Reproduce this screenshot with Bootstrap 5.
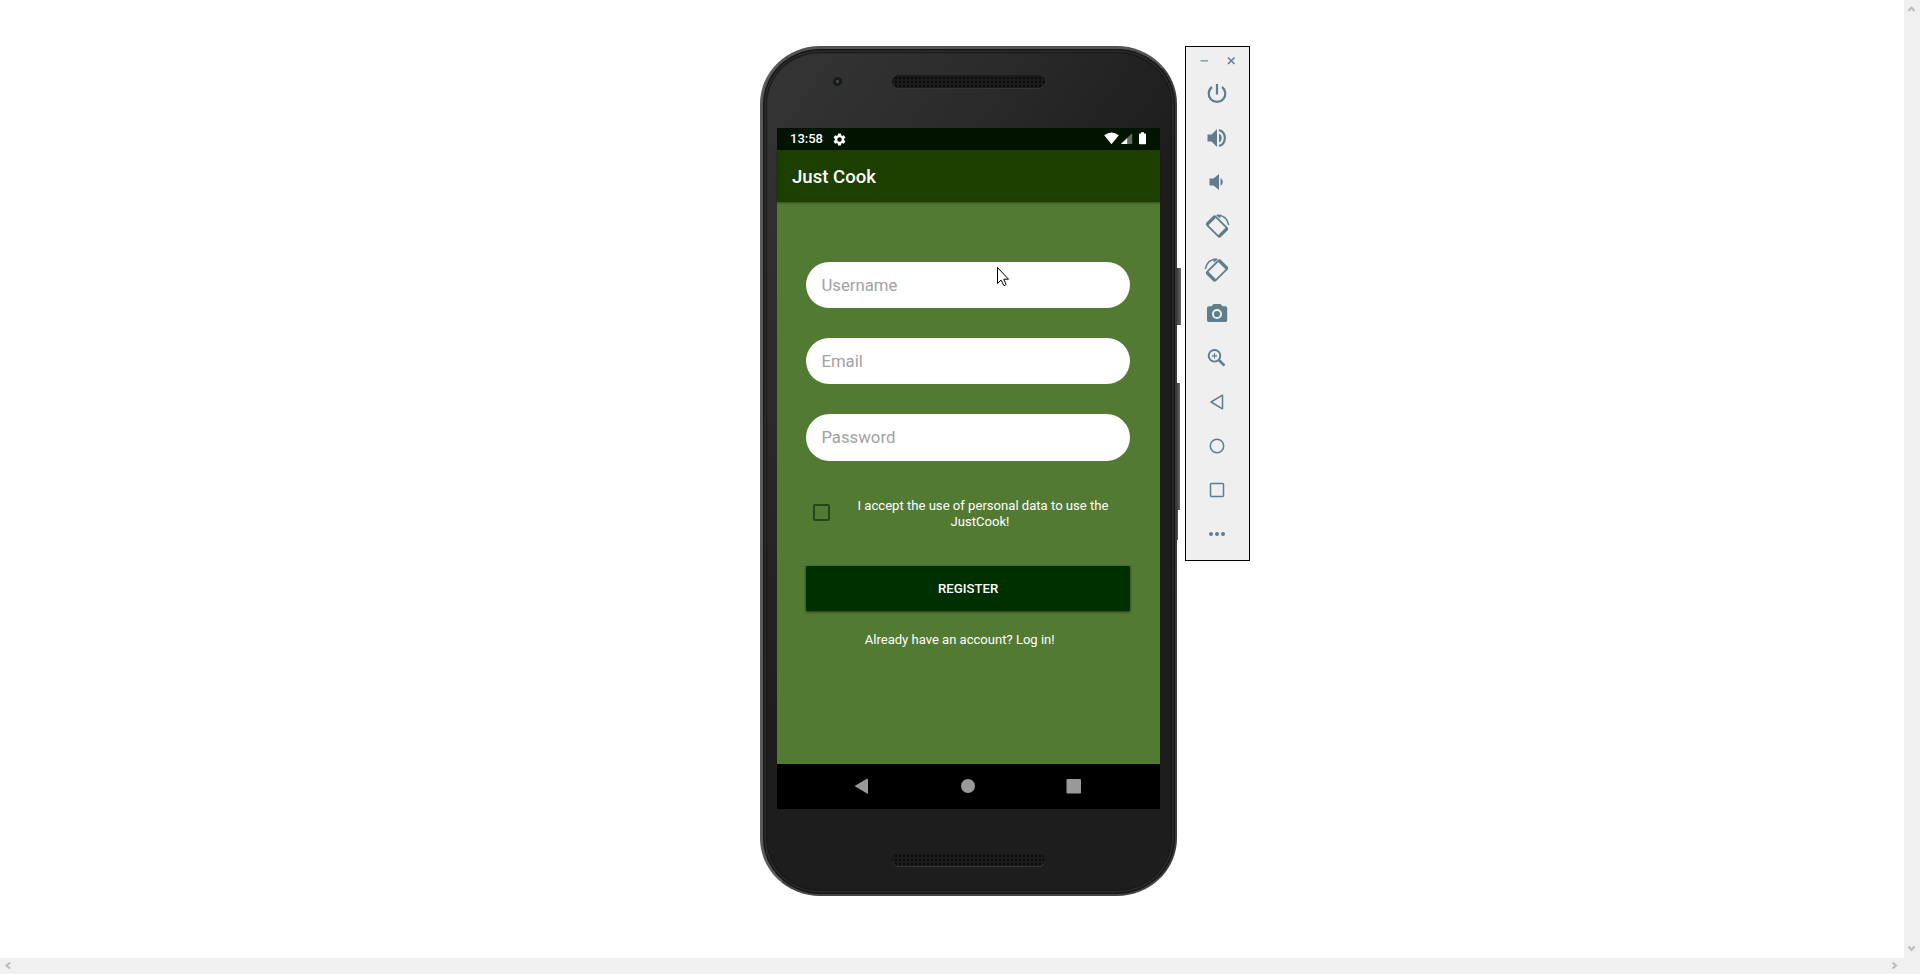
<!DOCTYPE html>
<html lang="en">
<head>
<meta charset="utf-8">
<title>Just Cook</title>
<link rel="stylesheet" href="https://cdn.jsdelivr.net/npm/bootstrap@5.3.0/dist/css/bootstrap.min.css">
<script src="https://cdn.jsdelivr.net/npm/bootstrap@5.3.0/dist/js/bootstrap.bundle.min.js"></script>
<style>
body{font-family:Roboto,sans-serif;width:1920px;height:974px;background:#fff;color:#fff;overflow:hidden}
.stage{display:grid;grid-template:958px 16px/1904px 16px}
.view{padding:46px 0 0 760px;gap:8px}
.phone{width:417px;height:850px;border-radius:60px/58px;padding:0 15px 0 14px;
  background:linear-gradient(125deg,#353535 0,#2c2c2d 22%,#1d1d1d 48%,#1e1e1f 100%);
  border:solid;border-width:3px 2px 2px 3px;border-color:#525454 #3b3b3b #454545 #5a5c5c;
  box-shadow:inset 0 0 0 1.5px #161616,inset 0 0 0 3px #2c2c2c,inset 0 0 1px 4px #171717}
.bezel-top{height:79px}
.bezel-low{height:85px}
.grille{width:153px;height:13px;border-radius:7px;background:radial-gradient(circle,#090909 .9px,transparent 1.3px) 2px 1px/4px 4px,#1b1b1b;box-shadow:0 1px 0 #343434}
.bezel-top .grille{margin:26px 0 0 115px}
.bezel-low .grille{margin:44px 0 0 115px}
.lens{width:15px;height:15px;border-radius:50%;left:53px;top:25px;background:radial-gradient(circle at 50% 50%,#444b50 0 1px,#17191b 2px 4px,#2f3030 5px,#303030 7px)}
.key{background:linear-gradient(90deg,#3c3c3c,#6b6b6b);left:414px}
.key-power{top:219px;width:4px;height:57px}
.key-volume{top:334px;width:3px;height:127px}
.key-edge{top:461px;width:1px;height:30px}
.app{width:383px;height:681px;background:#527a32}
.status{height:22px;background:#001400;padding:0 12px 0 13px;font-size:13px;font-weight:500}
.gear{margin-left:9px}
.appbar{height:52px;background:#1c3f00;padding:3px 0 0 15px;font-size:18.6px;font-weight:500;box-shadow:0 1px 2px #0006}
.pane{height:562px;padding:59.5px 30px 0 29.4px}
.pane .form-control{height:46.5px;border:0;border-radius:24px;padding:0 15px;font-size:16.75px;margin-bottom:29.8px;background:#fff}
.pane .form-control::placeholder{color:#a2a2a2;opacity:1}
.accept{height:76px;font-size:13.1px;line-height:15.3px}
.tick{width:17px;height:17px;margin:14px 0 0 6.600px;border:2px solid #26461a;border-radius:2px;background:none;appearance:none}
.accept label{margin-left:27px;width:252px;padding-top:8px}
.accept label span{position:relative;left:-3px}
.register{height:44.5px;background:#003000;border:0;border-radius:1px;font-size:13.2px;font-weight:500;color:#fff;box-shadow:0 1px 3px #0009}
.login{font-size:13.05px;color:#fff;margin:19.3px 17px 0 0}
.softkeys{height:45px;background:#000}
.tools{width:65px;height:515px;border:1px solid #000;background:#efefef;color:#607d8b}
.tools button{height:44px;width:44px;border:0;padding:0;margin-right:1px;background:none;color:inherit}
.tools .winrow{height:25px}
svg{display:block}
.bar{background:#f0f0f0}
</style>
</head>
<body>
<div class="stage">
  <main class="view d-flex align-items-start">
    <div class="phone position-relative flex-shrink-0">
      <div class="bezel-top d-flex position-relative">
        <i class="lens position-absolute"></i>
        <div class="grille"></div>
      </div>
      <section class="app d-flex flex-column">
        <div class="status d-flex align-items-center">
          <span>13:58</span>
          <svg class="gear" width="15" height="15" viewBox="0 0 24 24" fill="#fff"><path d="M19.14 12.94c.04-.3.06-.61.06-.94 0-.32-.02-.64-.07-.94l2.03-1.58a.49.49 0 0 0 .12-.61l-1.92-3.32a.49.49 0 0 0-.59-.22l-2.39.96a7 7 0 0 0-1.62-.94l-.36-2.54a.48.48 0 0 0-.48-.41h-3.84a.48.48 0 0 0-.47.41l-.36 2.54c-.59.24-1.13.57-1.62.94l-2.39-.96a.48.48 0 0 0-.59.22L2.74 8.87a.48.48 0 0 0 .12.61l2.03 1.58c-.05.3-.09.63-.09.94s.02.64.07.94l-2.03 1.58a.49.49 0 0 0-.12.61l1.92 3.32c.12.22.37.29.59.22l2.39-.96c.5.38 1.03.7 1.62.94l.36 2.54c.05.24.24.41.48.41h3.84c.24 0 .44-.17.47-.41l.36-2.54a6.8 6.8 0 0 0 1.62-.94l2.39.96c.22.08.47 0 .59-.22l1.92-3.32a.48.48 0 0 0-.12-.61zM12 15.6a3.6 3.6 0 1 1 0-7.2 3.6 3.6 0 0 1 0 7.2z"/></svg>
          <svg class="ms-auto" width="44" height="22" viewBox="0 0 44 22" fill="#fff"><path d="M.2 7.3Q7.5 1.8 14.8 7.3L7.5 16.2z"/><path d="M28.2 5v11H17z" opacity=".38"/><path d="M23.2 10v6H17z"/><path d="M35 6.2q0-.8.8-.8h1.2V4.2h3v1.2h1.200q.8 0 .8.8v9.200q0 .8-.8.8h-5.400q-.8 0-.8-.8z"/></svg>
        </div>
        <header class="appbar d-flex align-items-center position-relative">Just Cook</header>
        <form class="pane">
          <input class="form-control" type="text" placeholder="Username" aria-label="Username">
          <input class="form-control" type="email" placeholder="Email" aria-label="Email">
          <input class="form-control" type="password" placeholder="Password" aria-label="Password">
          <div class="accept d-flex align-items-start">
            <input class="tick flex-shrink-0" type="checkbox" id="accept">
            <label for="accept" class="text-center text-nowrap">I accept the use of personal data to use the<br><span>JustCook!</span></label>
          </div>
          <button type="button" class="register w-100 d-block">REGISTER</button>
          <div class="login text-center">Already have an account? Log in!</div>
        </form>
        <nav class="softkeys">
          <svg width="383" height="45" fill="#999"><path d="M77.500 22L90 14.800q1-.5 1 .5V29q0 1-1 .5z"/><circle cx="191" cy="22" r="7"/><rect x="289.500" y="15" width="14.500" height="14.500" rx="1"/></svg>
        </nav>
      </section>
      <div class="bezel-low d-flex"><div class="grille"></div></div>
      <i class="key key-power position-absolute"></i>
      <i class="key key-volume position-absolute"></i>
      <i class="key key-edge position-absolute"></i>
      <svg class="position-absolute" style="left:233px;top:217px" width="16" height="24" viewBox="0 0 16 24" fill="#fff" stroke="#000"><path d="M1.500 1.500v16l3.600-3.400 2.700 5.400q1.800.4 2.200-1.200l-2.200-5.100h4.700z"/></svg>
    </div>
    <aside class="tools d-flex flex-column align-items-center">
      <div class="winrow"><svg width="64" height="26" fill="none" stroke="#607d8b"><path d="M14.500 13.800h7.500" stroke="#90a4ae" stroke-width="1.700"/><path d="M42 10.500l6.500 6.500M48.500 10.500L42 17" stroke-width="1.500"/></svg></div>
      <button aria-label="Power"><svg width="44" height="44" viewBox="0 0 44 44" fill="none" stroke="currentColor" stroke-width="2.200"><path d="M22 12v10.500M17 15a8.300 8.300 0 1 0 10 0"/></svg></button>
      <button aria-label="Volume up"><svg width="44" height="44" viewBox="0 0 44 44" fill="currentColor"><path d="M12.500 18.500h4l5.500-5.500v18l-5.500-5.500h-4zM24 17.500a5 5 0 0 1 0 9z"/><path d="M24 14a8.400 8.400 0 0 1 0 16" fill="none" stroke="currentColor" stroke-width="2.200"/></svg></button>
      <button aria-label="Volume down"><svg width="44" height="44" viewBox="0 0 44 44" fill="currentColor"><path d="M14.500 18.500h4l5.500-4.500v16l-5.500-4.500h-4zM25.500 18a4.600 4.600 0 0 1 0 8z"/></svg></button>
      <button aria-label="Rotate left"><svg width="44" height="44" viewBox="0 0 44 44" fill="none" stroke="currentColor"><g transform="translate(22 22.500)rotate(45)"><rect x="-9.200" y="-6" width="18.400" height="12" rx="1.200" stroke-width="1.800"/><path d="M-8.500-5.500v11M8.500-5.500v11" stroke-width="3.200"/></g><path d="M22 11.200q9.800-.2 11.700 9.800" stroke-width="1.500"/><path d="M21 11l5-.6-1 4z" fill="currentColor" stroke="none"/></svg></button>
      <button aria-label="Rotate right"><svg width="44" height="44" viewBox="0 0 44 44" fill="none" stroke="currentColor"><g transform="translate(22 22.500)rotate(-45)"><rect x="-9.200" y="-6" width="18.400" height="12" rx="1.200" stroke-width="1.800"/><path d="M-8.500-5.500v11M8.500-5.500v11" stroke-width="3.200"/></g><path d="M22 11.200q-9.800-.2-11.700 9.800" stroke-width="1.500"/><path d="M23 11l-5-.6 1 4z" fill="currentColor" stroke="none"/></svg></button>
      <button aria-label="Screenshot"><svg width="44" height="44" viewBox="0 0 44 44" fill="currentColor"><path fill-rule="evenodd" d="M18.500 12h7l2 2.200h3a1.700 1.700 0 0 1 1.700 1.700v12.400a1.700 1.700 0 0 1-1.700 1.700H13.700a1.700 1.700 0 0 1-1.700-1.700V15.900a1.700 1.700 0 0 1 1.700-1.700h2.800zM22 17a5 5 0 1 0 0 10 5 5 0 0 0 0-10zm0 1.900a3.100 3.100 0 1 1 0 6.200 3.100 3.100 0 0 1 0-6.200z"/></svg></button>
      <button aria-label="Zoom"><svg width="44" height="44" viewBox="0 0 44 44" fill="none" stroke="currentColor"><circle cx="19.500" cy="19.800" r="5.800" stroke-width="1.900"/><path d="M23.800 24l5.700 5.700" stroke-width="2.600"/><path d="M19.500 17.200v5.200M16.900 19.800h5.200" stroke-width="1.200"/></svg></button>
      <button aria-label="Back"><svg width="44" height="44" viewBox="0 0 44 44" fill="none" stroke="currentColor" stroke-width="1.500" stroke-linejoin="round"><path d="M16 22l11.500-6.800v13.600z"/></svg></button>
      <button aria-label="Home"><svg width="44" height="44" viewBox="0 0 44 44" fill="none" stroke="currentColor" stroke-width="1.500"><circle cx="22" cy="22" r="6.700"/></svg></button>
      <button aria-label="Overview"><svg width="44" height="44" viewBox="0 0 44 44" fill="none" stroke="currentColor" stroke-width="1.500"><rect x="15.500" y="15.500" width="13" height="13" rx="1"/></svg></button>
      <button aria-label="More"><svg width="44" height="44" viewBox="0 0 44 44" fill="currentColor"><circle cx="16" cy="22" r="2"/><circle cx="22" cy="22" r="2"/><circle cx="28" cy="22" r="2"/></svg></button>
    </aside>
  </main>
  <div class="bar d-flex flex-column justify-content-between">
    <svg width="16" height="16" fill="none" stroke="#bbb" stroke-width="2"><path d="M4.500 11l3-3.500 3 3.500"/></svg>
    <svg width="16" height="16" fill="none" stroke="#bbb" stroke-width="2"><path d="M4.500 4.500l3 3.500 3-3.500"/></svg>
  </div>
  <div class="bar d-flex justify-content-between">
    <svg width="16" height="16" fill="none" stroke="#bbb" stroke-width="2"><path d="M10 4.500L6.500 7.500l3.500 3"/></svg>
    <svg width="16" height="16" fill="none" stroke="#bbb" stroke-width="2"><path d="M4.500 4.500L8 7.500l-3.500 3"/></svg>
  </div>
  <div class="bar"></div>
</div>
</body>
</html>
